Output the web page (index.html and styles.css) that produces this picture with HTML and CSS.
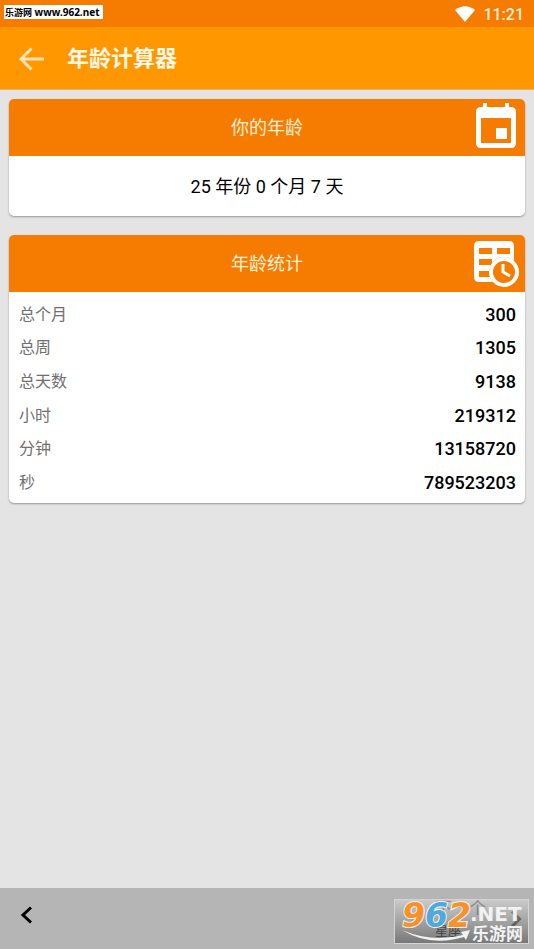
FILE: index.html
```html
<!DOCTYPE html>
<html lang="zh-CN">
<head>
<meta charset="utf-8">
<meta name="viewport" content="width=device-width, initial-scale=1">
<title>年龄计算器</title>
<link rel="stylesheet" href="styles.css">
</head>
<body>
<div class="status">
  <span class="site-tag"><span class="site-name">乐游网</span> www.962.net</span>
  <span class="status-right">
    <svg width="20" height="16" viewBox="0 0 20 16" aria-hidden="true"><path d="M0 4Q10-3.500 20 4L10 16Z" fill="#fff"/></svg>
    <time>11:21</time>
  </span>
</div>
<header class="appbar">
  <button class="back" type="button" aria-label="返回">
    <svg width="26" height="24" viewBox="0 0 26 24" aria-hidden="true"><path d="M25 12H2.500M12.500 1.500L2 12L12.500 22.500" fill="none" stroke="#ffe3b5" stroke-width="3"/></svg>
  </button>
  <h1>年龄计算器</h1>
</header>
<main>
  <section class="card">
    <div class="card-head">
      <h2>你的年龄</h2>
      <svg class="card-icon calendar" width="40" height="48" viewBox="0 0 40 48" aria-hidden="true"><path fill="#fff" fill-rule="evenodd" d="M7 0H11V4H29V0H33V4H35Q40 4 40 9V40Q40 45 35 45H5Q0 45 0 40V9Q0 4 5 4H7ZM5 15V40H35V15ZM20 25H31V36H20Z"/></svg>
    </div>
    <p class="age">25 年份 0 个月 7 天</p>
  </section>
  <section class="card">
    <div class="card-head">
      <h2>年龄统计</h2>
      <svg class="card-icon" width="46" height="46" viewBox="0 0 46 46" aria-hidden="true">
        <path fill="#fff" fill-rule="evenodd" d="M6 0H36Q41 0 41 5V41H6Q1 41 1 36V5Q1 0 6 0ZM6 7V13H19V7ZM24 7V13H37V7ZM6 18V24H19V18ZM24 18V24H37V18ZM6 30V36H19V30Z"/>
        <path fill="#f57c00" d="M36 41V36H42V46H30V41Z"/>
        <circle cx="31" cy="31" r="15" fill="#f57c00"/>
        <circle cx="31" cy="31" r="13" fill="#f57c00" stroke="#fff" stroke-width="4"/>
        <path d="M30 23V31L37 35" fill="none" stroke="#fff" stroke-width="3"/>
      </svg>
    </div>
    <div class="stats">
      <table>
        <tbody>
          <tr><th scope="row">总个月</th><td>300</td></tr>
          <tr><th scope="row">总周</th><td>1305</td></tr>
          <tr><th scope="row">总天数</th><td>9138</td></tr>
          <tr><th scope="row">小时</th><td>219312</td></tr>
          <tr><th scope="row">分钟</th><td>13158720</td></tr>
          <tr><th scope="row">秒</th><td>789523203</td></tr>
        </tbody>
      </table>
    </div>
  </section>
</main>
<footer class="bottom">
  <button class="prev" type="button" aria-label="上一个">
    <svg width="12" height="18" viewBox="0 0 12 18" aria-hidden="true"><path d="M11 1.500L3 9L11 16.500" fill="none" stroke="#000" stroke-width="3"/></svg>
  </button>
  <button class="next" type="button">
    <span class="next-label"><span>下一个</span><small>星座</small></span>
    <svg width="12" height="18" viewBox="0 0 12 18" aria-hidden="true"><path d="M2 1.500L9.500 9L2 16.500" fill="none" stroke="#333" stroke-width="3"/></svg>
  </button>
  <svg class="watermark" width="135" height="45" viewBox="0 0 135 45" role="img" aria-label="962.NET 乐游网">
    <defs>
      <linearGradient id="plate" x1="0" y1="0" x2="0" y2="1"><stop offset="0" stop-color="#e0e0e0" stop-opacity=".5"/><stop offset="1" stop-color="#444" stop-opacity=".55"/></linearGradient>
    </defs>
    <rect x=".5" y=".5" width="134" height="44" fill="url(#plate)" stroke="#d4d4d4"/>
    <path d="M8 31Q38 44 69 36L67 33L76 31L72 41L70 38Q36 48 8 31Z" fill="#f2f2f2"/>
    <g class="logo-digits"><text x="8" y="28" fill="#f7922b">9</text><text x="31" y="28" fill="#4fa9dc">6</text><text x="54" y="28" fill="#f7922b">2</text></g>
    <text class="logo-net" x="76" y="22">.NET</text>
    <text class="logo-name" x="78" y="41">乐游网</text>
  </svg>
</footer>
</body>
</html>
```
FILE: styles.css
```css
* { box-sizing: border-box; }

body {
  margin: 0;
  min-height: 100vh;
  display: flex;
  flex-direction: column;
  background: #e4e4e4;
  color: #000;
  font-family: Roboto, "Noto Sans CJK SC", sans-serif;
}

h1, h2, p { margin: 0; }

button {
  padding: 0;
  border: 0;
  background: none;
  font-family: inherit;
  display: flex;
  align-items: center;
}

.status {
  height: 27px;
  padding: 0 10px 0 4px;
  display: flex;
  justify-content: space-between;
  background: #f57c00;
}

.site-tag {
  height: 14px;
  margin-top: 5px;
  padding: 0 3px 0 1px;
  background: #fff;
  font: bold 10px/15px "Noto Sans", "Noto Sans CJK SC", sans-serif;
}

.site-name { font-size: 9px; }

.status-right {
  display: flex;
  align-items: center;
  gap: 8px;
  color: #fff0d8;
  font-size: 16px;
  line-height: 28px;
}

.status-right time {
  padding-top: 2px;
  font-weight: 500;
}

.appbar {
  height: 63px;
  padding-left: 19px;
  display: flex;
  align-items: center;
  gap: 22px;
  background: #ff9800;
  border-bottom: 1px solid #f0b45c;
}

.back { padding-top: 1px; }

h1 {
  padding-top: 2px;
  color: #fff6e3;
  font-size: 22px;
  line-height: 32px;
  font-weight: bold;
}

main {
  flex: 1;
  padding: 9px;
  display: flex;
  flex-direction: column;
  gap: 19px;
}

.card {
  overflow: hidden;
  border-radius: 5px;
  background: #fff;
  box-shadow: 0 1px 2px rgba(0, 0, 0, .35);
}

.card-head {
  height: 57px;
  padding: 0 6px;
  display: grid;
  grid-template-columns: 1fr auto 1fr;
  align-items: center;
  background: #f57c00;
}

h2 {
  grid-column: 2;
  padding-top: 1px;
  color: #fff0d8;
  font-size: 18px;
  line-height: 26px;
  font-weight: normal;
}

.card-icon { justify-self: end; }

.calendar {
  align-self: start;
  margin: 4px 3px 0 0;
}

.age {
  padding: 18px 0 16px;
  font-size: 18px;
  line-height: 26px;
  text-align: center;
}

.stats { padding: 6px 9px 3px 10px; }

table {
  width: 100%;
  height: 202px;
  border-collapse: collapse;
}

th, td { padding: 0; line-height: 24px; }

th {
  color: #707070;
  font-size: 16px;
  font-weight: normal;
  text-align: left;
}

td {
  font-size: 18px;
  font-weight: 500;
  text-align: right;
}

.bottom {
  position: relative;
  height: 61px;
  padding: 0 12px 0 20px;
  display: flex;
  justify-content: space-between;
  align-items: center;
  background: #b5b5b5;
}

.prev { padding-bottom: 8px; }

.next { gap: 24px; color: #444; }

.next-label {
  display: flex;
  flex-direction: column;
  font-size: 17px;
  line-height: 24px;
}

.next-label small {
  color: #111;
  font-size: 13px;
  line-height: 22px;
  text-align: left;
}

.watermark {
  position: absolute;
  right: 5px;
  bottom: 5px;
}

.logo-digits {
  font: italic bold 33px "DejaVu Sans", sans-serif;
  stroke: #f4f4f4;
  stroke-width: 2px;
  paint-order: stroke;
}

.logo-net {
  font: bold 20px "DejaVu Sans", sans-serif;
  fill: #f2f2f2;
}

.logo-name {
  font: bold 17px "Noto Sans CJK SC", sans-serif;
  fill: #f2f2f2;
}
```
